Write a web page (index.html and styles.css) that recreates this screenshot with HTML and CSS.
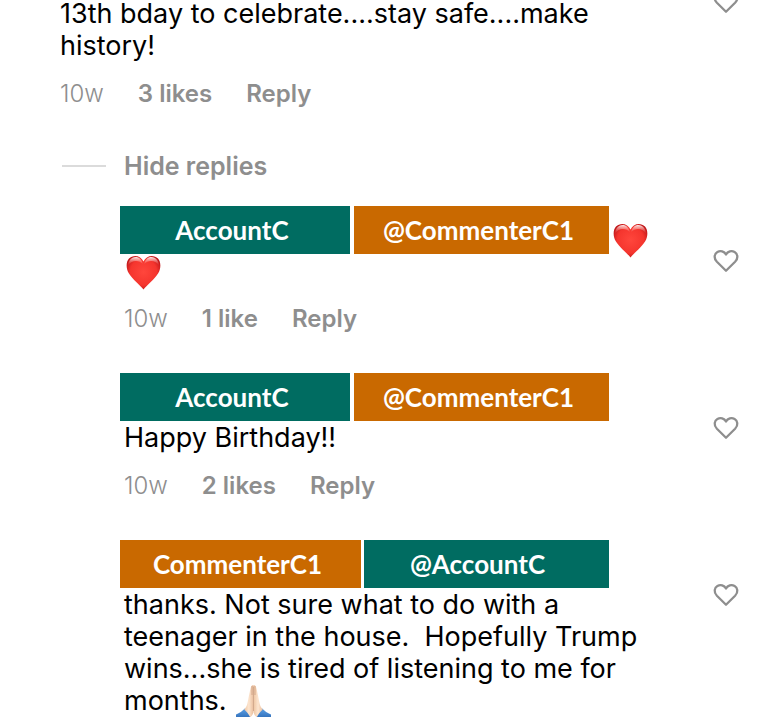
FILE: index.html
```html
<!DOCTYPE html>
<html lang="en">
<head>
<meta charset="utf-8">
<meta name="viewport" content="width=device-width, initial-scale=1">
<title>Comments</title>
<link rel="stylesheet" href="styles.css">
</head>
<body>
<svg class="defs" aria-hidden="true">
  <defs>
    <radialGradient id="red" cx=".5" cy=".48" r=".6">
      <stop offset="0" stop-color="#ff463c"/>
      <stop offset=".65" stop-color="#f5352e"/>
      <stop offset="1" stop-color="#b51115"/>
    </radialGradient>
    <linearGradient id="gloss" x1="0" y1="0" x2="0" y2="1">
      <stop offset="0" stop-color="#fff" stop-opacity=".9"/>
      <stop offset="1" stop-color="#ff8a80" stop-opacity="0"/>
    </linearGradient>
    <linearGradient id="skin" x1="0" y1="0" x2="1" y2="0">
      <stop offset="0" stop-color="#eec5a2"/>
      <stop offset=".5" stop-color="#fde5cf"/>
      <stop offset="1" stop-color="#e9bd9c"/>
    </linearGradient>
    <linearGradient id="sleeve" x1="0" y1="0" x2="0" y2="1">
      <stop offset="0" stop-color="#5ba0e6"/>
      <stop offset="1" stop-color="#2965b0"/>
    </linearGradient>
    <symbol id="like" viewBox="0 0 26 24">
      <path d="M13 21.700 3.900 12.800C.4 9.200 1.400 4.700 4.400 3 7.500 1.200 11.200 2.300 13 5.500c1.800-3.200 5.500-4.300 8.600-2.500 3 1.700 4 6.200.5 9.800z" fill="none" stroke="#8e8e8e" stroke-width="2.300" stroke-linejoin="round"/>
    </symbol>
    <symbol id="heart" viewBox="0 0 35 35">
      <path d="M17.500 34.400C14 30 6.500 24.400 2.800 18.200-.1 13.200-.1 7 3 3.600 7.300-.9 14.900.3 17.500 6.600 20.100.3 27.700-.9 32 3.600c3.100 3.400 3.100 9.600.2 14.600C28.500 24.400 21 30 17.500 34.400z" fill="url(#red)"/>
      <path d="M2 10.500C2.300 5.800 5.400 2 9.500 2c3.700 0 6.400 2.700 7.300 7C13 4.800 6 4.500 2 10.500z" fill="url(#gloss)"/>
      <path d="M33 10.500C32.700 5.800 29.600 2 25.500 2c-3.700 0-6.400 2.700-7.300 7C22 4.800 29 4.500 33 10.500z" fill="url(#gloss)"/>
    </symbol>
    <symbol id="pray" viewBox="0 0 35 35">
      <path d="M0 29.500C3.500 28 6.500 26 8.700 23.500c2.800 2.500 5 5.500 6.300 9L13.500 35H0z" fill="url(#sleeve)"/>
      <path d="M35 29.500C31.500 28 28.500 26 26.300 23.500c-2.800 2.500-5 5.500-6.300 9l1.500 2.500H35z" fill="url(#sleeve)"/>
      <path d="M8.200 24.500c2.200-2.300 3-4.500 3.600-7.700.8-4.300 1.500-8.500 2.500-12.300C14.800 2 15.400.2 17 .1c.3 0 .5.500.5 1V26c0 2.500-1.200 4.800-3.300 6.300-1.300-2.800-3.400-5.400-6-7.800z" fill="url(#skin)"/>
      <path d="M26.800 24.500c-2.200-2.300-3-4.500-3.600-7.700-.8-4.300-1.500-8.500-2.500-12.300C20.200 2 19.600.2 18 .1c-.3 0-.5.500-.5 1V26c0 2.500 1.200 4.800 3.300 6.300 1.300-2.800 3.400-5.400 6-7.800z" fill="url(#skin)"/>
      <path d="M17.500 1.500V26M16 1v9M19 1v9" fill="none" stroke="#c08f70" stroke-width=".6"/>
    </symbol>
  </defs>
</svg>
<main class="thread">
  <article class="comment">
    <div class="content">
      <p class="text">13th bday to celebrate....stay safe....make history!</p>
      <div class="meta"><time>10w</time><button>3 likes</button><button>Reply</button></div>
    </div>
    <button class="like" aria-label="Like"><svg><use href="#like"/></svg></button>
  </article>

  <button class="toggle">Hide replies</button>

  <section class="replies">
    <article class="comment">
      <div class="content">
        <div class="names">
          <div class="tags"><a class="tag account" href="#">AccountC</a><a class="tag commenter mention" href="#">@CommenterC1</a></div>
          <svg class="emoji" role="img" aria-label="Red heart"><use href="#heart"/></svg>
        </div>
        <p class="text"><svg class="emoji" role="img" aria-label="Red heart"><use href="#heart"/></svg></p>
        <div class="meta"><time>10w</time><button>1 like</button><button>Reply</button></div>
      </div>
      <button class="like" aria-label="Like"><svg><use href="#like"/></svg></button>
    </article>

    <article class="comment">
      <div class="content">
        <div class="names">
          <div class="tags"><a class="tag account" href="#">AccountC</a><a class="tag commenter mention" href="#">@CommenterC1</a></div>
        </div>
        <p class="text">Happy Birthday!!</p>
        <div class="meta"><time>10w</time><button>2 likes</button><button>Reply</button></div>
      </div>
      <button class="like" aria-label="Like"><svg><use href="#like"/></svg></button>
    </article>

    <article class="comment">
      <div class="content">
        <div class="names">
          <div class="tags even"><a class="tag commenter" href="#">CommenterC1</a><a class="tag account mention" href="#">@AccountC</a></div>
        </div>
        <p class="text">thanks. Not sure what to do with a teenager in the house.&nbsp; Hopefully Trump wins...she is tired of listening to me for months. <svg class="emoji" role="img" aria-label="Folded hands"><use href="#pray"/></svg></p>
      </div>
      <button class="like" aria-label="Like"><svg><use href="#like"/></svg></button>
    </article>
  </section>
</main>
</body>
</html>
```
FILE: styles.css
```css
* {
  box-sizing: border-box;
}

html {
  overflow: hidden;
}

body {
  margin: 0;
  background: #fff;
  color: #000;
  font-family: Inter, "Liberation Sans", sans-serif;
  font-size: 27px;
  line-height: 32px;
}

.defs {
  position: absolute;
  width: 0;
  height: 0;
}

button {
  padding: 0;
  border: 0;
  background: none;
  color: #8e8e8e;
  font: inherit;
  cursor: pointer;
}

/* The thread is scrolled slightly past its first visible line. */
.thread {
  margin-top: -2px;
  padding: 0 43px 0 60px;
}

.comment {
  display: flex;
  justify-content: space-between;
}

.content {
  flex: 1;
  min-width: 0;
}

.text {
  margin: 0;
}

.like {
  flex: none;
  width: 26px;
  height: 24px;
  margin-left: 60px;
  margin-top: -8px;
}

.like svg {
  display: block;
  width: 26px;
  height: 24px;
}

.meta {
  display: flex;
  gap: 34px;
  margin-top: 16px;
  color: #8e8e8e;
  font-size: 24px;
  line-height: 32px;
}

.meta time {
  font-weight: 300;
}

.meta button,
.toggle {
  font-weight: 600;
}

.toggle {
  display: flex;
  align-items: center;
  gap: 18px;
  margin-top: 40px;
  padding-left: 2px;
  font-size: 25px;
  line-height: 32px;
}

.toggle::before {
  content: "";
  width: 44px;
  height: 2px;
  background: #dbdbdb;
}

.replies {
  display: flex;
  flex-direction: column;
  gap: 38px;
  margin-top: 24px;
  padding-left: 64px;
}

.replies .text {
  padding-top: 1px;
}

.names {
  display: flex;
  align-items: flex-end;
  gap: 4px;
  margin-left: -4px;
}

.names .emoji {
  flex: none;
  margin-bottom: -4px;
}

.tags {
  display: flex;
  gap: 4px;
  width: 100%;
  max-width: 489px;
}

.tag {
  flex: 224;
  padding-right: 6px;
  color: #fff;
  font-family: Lato, "Open Sans", sans-serif;
  font-size: 26px;
  font-weight: 700;
  line-height: 48px;
  text-align: center;
  text-decoration: none;
}

.tag.mention {
  flex: 249;
}

.even {
  gap: 3px;
}

.even .tag {
  flex: 235;
}

.even .tag.mention {
  flex: 227;
  padding-right: 18px;
}

.account {
  background: #006c61;
}

.commenter {
  background: #c96900;
}

.replies .like {
  margin-top: 43px;
}

.emoji {
  width: 35px;
  height: 35px;
}

.text .emoji {
  margin: -3px 2px;
  vertical-align: middle;
}
```
